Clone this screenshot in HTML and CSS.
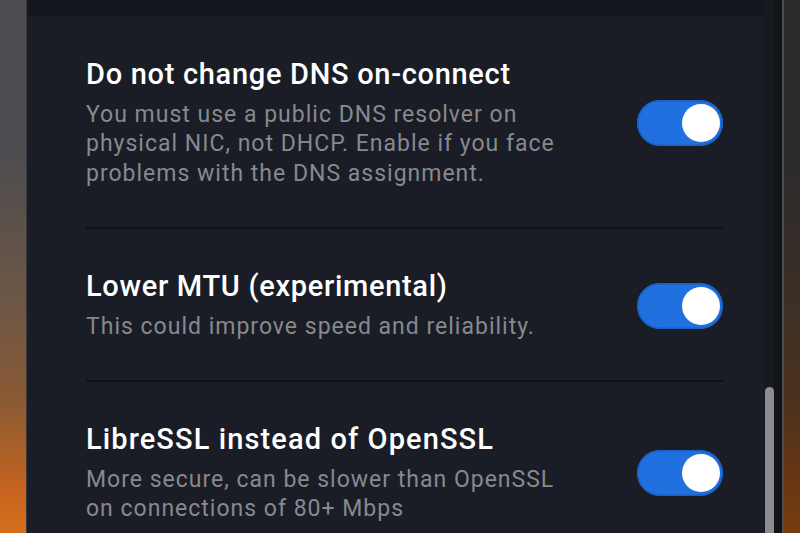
FILE: index.html
```html
<!DOCTYPE html>
<html lang="en">
<head>
<meta charset="utf-8">
<title>Settings</title>
<link rel="stylesheet" href="styles.css">
</head>
<body>
<div class="window">
  <div class="content">
    <div class="topband"></div>
    <div class="list">
      <div class="item item-first">
        <div class="text">
          <div class="title">Do not change DNS on-connect</div>
          <div class="desc">You must use a public DNS resolver on physical NIC, not DHCP. Enable if you face problems with the DNS assignment.</div>
        </div>
        <div class="toggle"><span class="knob"></span></div>
      </div>
      <div class="divider"></div>
      <div class="item">
        <div class="text">
          <div class="title">Lower MTU (experimental)</div>
          <div class="desc">This could improve speed and reliability.</div>
        </div>
        <div class="toggle"><span class="knob"></span></div>
      </div>
      <div class="divider"></div>
      <div class="item">
        <div class="text">
          <div class="title title-wide">LibreSSL instead of OpenSSL</div>
          <div class="desc">More secure, can be slower than OpenSSL on connections of 80+ Mbps</div>
        </div>
        <div class="toggle"><span class="knob"></span></div>
      </div>
    </div>
  </div>
  <div class="scrollbar">
    <div class="track"><div class="thumb"></div></div>
    <div class="gutter"></div>
  </div>
</div>
</body>
</html>
```
FILE: styles.css
```css
html, body {
  margin: 0;
  padding: 0;
  height: 100%;
  overflow: hidden;
}
body {
  font-family: Roboto, "Noto Sans", "Liberation Sans", sans-serif;
  background:
    linear-gradient(90deg, rgba(0,0,0,0) 0, rgba(0,0,0,0) 780px, rgba(0,0,0,0.45) 780px),
    linear-gradient(180deg, #4c4c52 0%, #4f4d50 30%, #6b5646 55%, #8a5a34 75%, #c5641f 92%, #d66e1e 100%);
  display: flex;
}
.window {
  margin-left: 26px;
  width: 758px;
  height: 533px;
  display: flex;
  border-left: 1px solid #3a3a3e;
  border-right: 2px solid #4d4d4f;
  box-sizing: border-box;
}
.content {
  flex: 1;
  background: #1a1d26;
  display: flex;
  flex-direction: column;
  min-width: 0;
}
.topband {
  height: 16px;
  background: #13161d;
  flex: none;
}
.list {
  padding: 0 41px 0 59px;
}
.item {
  display: flex;
  align-items: center;
  justify-content: space-between;
  padding: 41px 0 39px;
}
.item-first {
  padding-top: 42px;
}
.text {
  width: 485px;
}
.title {
  color: #ffffff;
  font-size: 29px;
  font-weight: 500;
  line-height: 32px;
  letter-spacing: 0.7px;
}
.title-wide {
  letter-spacing: 1.1px;
}
.desc {
  color: #87898e;
  font-size: 23px;
  line-height: 29.3px;
  margin-top: 10px;
  letter-spacing: 1px;
}
.toggle {
  flex: none;
  width: 86px;
  height: 46px;
  border-radius: 23px;
  background: #2170df;
  box-shadow: inset 0 0 0 1.5px #1b5fc4;
  display: flex;
  align-items: center;
  justify-content: flex-end;
  padding-right: 3px;
  box-sizing: border-box;
}
.knob {
  width: 38px;
  height: 38px;
  border-radius: 50%;
  background: #ffffff;
}
.divider {
  height: 2px;
  background: #0f1117;
}
.scrollbar {
  flex: none;
  display: flex;
  width: 18px;
}
.track {
  width: 10px;
  background: #161920;
  display: flex;
  flex-direction: column;
  align-items: center;
}
.thumb {
  margin-top: 387px;
  width: 9px;
  flex: 1;
  background: #8b8d8f;
  border-radius: 5px 5px 0 0;
}
.gutter {
  flex: 1;
  background: #111319;
}
```
